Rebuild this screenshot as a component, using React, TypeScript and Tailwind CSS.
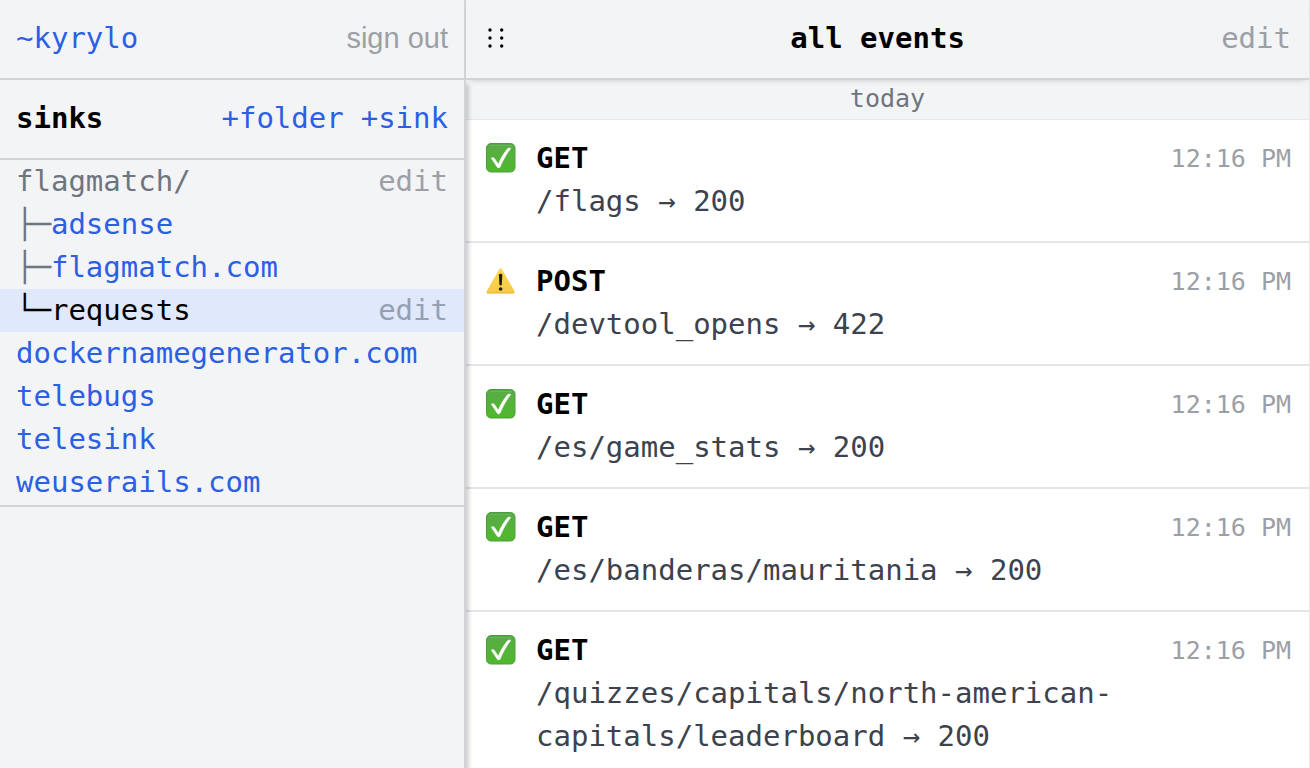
import React from "react";

interface Sink {
  name: string;
  branch?: string;
  selected?: boolean;
}

interface SinkEvent {
  id: number;
  ok: boolean;
  method: string;
  detail: string;
  time: string;
}

const folderSinks: Sink[] = [
  { name: "adsense", branch: "├─" },
  { name: "flagmatch.com", branch: "├─" },
  { name: "requests", branch: "└─", selected: true },
];

const rootSinks: Sink[] = [
  { name: "dockernamegenerator.com" },
  { name: "telebugs" },
  { name: "telesink" },
  { name: "weuserails.com" },
];

const events: SinkEvent[] = [
  { id: 1, ok: true, method: "GET", detail: "/flags → 200", time: "12:16 PM" },
  { id: 2, ok: false, method: "POST", detail: "/devtool_opens → 422", time: "12:16 PM" },
  { id: 3, ok: true, method: "GET", detail: "/es/game_stats → 200", time: "12:16 PM" },
  { id: 4, ok: true, method: "GET", detail: "/es/banderas/mauritania → 200", time: "12:16 PM" },
  {
    id: 5,
    ok: true,
    method: "GET",
    detail: "/quizzes/capitals/north-american-capitals/leaderboard → 200",
    time: "12:16 PM",
  },
];

function CheckIcon() {
  return (
    <svg viewBox="0 0 30 30" className="size-[30px]" role="img" aria-label="Success">
      <defs>
        <linearGradient id="check-fill" x1="0" y1="0" x2="0" y2="1">
          <stop offset="0" stopColor="#4fa045" />
          <stop offset="0.12" stopColor="#58ad45" />
          <stop offset="1" stopColor="#4fb82b" />
        </linearGradient>
      </defs>
      <rect x="0.5" y="0.5" width="28.5" height="28.5" rx="4.5" fill="url(#check-fill)" stroke="#4a9f3a" />
      <path d="M4 2.3h22" stroke="#6fb861" strokeWidth="1" strokeLinecap="round" />
      <path
        d="M5.200 15.200c1-1 2.400-1.100 3.200.1l3.900 5.700C14.600 15.600 17.800 10 21.600 5.600c.8-.9 2.200-.9 3.200-.1C20.600 11 17.100 17 14.200 24c-.5 1.200-2.300 1.300-3 .2z"
        fill="#fff"
        stroke="#fff"
        strokeWidth="0.4"
      />
    </svg>
  );
}

function WarningIcon() {
  return (
    <svg viewBox="0 0 30 30" className="size-[30px]" role="img" aria-label="Warning">
      <defs>
        <linearGradient id="warn-fill" x1="0" y1="0" x2="0" y2="1">
          <stop offset="0" stopColor="#fbd65c" />
          <stop offset="1" stopColor="#f8ca45" />
        </linearGradient>
      </defs>
      <path
        d="M13.200 3.200c.7-1.200 2.100-1.200 2.800 0L28.400 25c.7 1.200.1 2.400-1.300 2.400H2.100C.7 27.400.1 26.200.8 25z"
        fill="url(#warn-fill)"
      />
      <path d="M1.500 26.800h26" stroke="#ecb73b" strokeLinecap="round" />
      <path d="M12.900 9.300c-.1-2 3.500-2 3.400 0l-.5 9.200c-.1 1.200-2.300 1.200-2.400 0z" fill="#221c0c" />
      <circle cx="14.6" cy="23" r="1.8" fill="#221c0c" />
    </svg>
  );
}

function DragHandle() {
  return (
    <button type="button" aria-label="Reorder" className="w-12">
      <svg viewBox="0 0 24 24" className="size-6" fill="#000">
        {[4, 12, 20].map((y) => (
          <React.Fragment key={y}>
            <circle cx="4" cy={y} r="1.7" />
            <circle cx="15.7" cy={y} r="1.7" />
          </React.Fragment>
        ))}
      </svg>
    </button>
  );
}

function SinkRow({ name, branch, selected }: Sink) {
  return (
    <li
      className={`flex justify-between px-4 ${
        selected ? "bg-[#dfe9fb] text-black" : "text-[#6f757e]"
      }`}
    >
      <span className="whitespace-pre">
        {branch}
        <a href="#" className={selected ? "text-black" : "text-[#2b60e4]"}>
          {name}
        </a>
      </span>
      {selected && (
        <a href="#" className="text-[#94a0b5]">
          edit
        </a>
      )}
    </li>
  );
}

function Sidebar() {
  return (
    <aside className="flex w-[466px] shrink-0 flex-col">
      <div className="flex h-20 shrink-0 items-center justify-between border-r-2 border-b-2 border-[#d1d3d7] bg-gray-100 px-4 pb-0.5">
        <a href="#" className="text-[#2b60e4]">
          ~kyrylo
        </a>
        <button type="button" className="font-['Liberation_Sans',sans-serif] text-[#9ca0a6]">
          sign out
        </button>
      </div>
      <div className="relative z-10 flex-1 border-r-2 border-[#d1d3d7] bg-gray-100 shadow-[3px_4px_4px_rgba(0,0,0,0.18)]">
        <div className="flex h-20 items-center justify-between border-b-2 border-[#d1d3d7] px-4 pb-0.5">
          <h2 className="font-bold">sinks</h2>
          <div className="flex gap-[17px] text-[#2b60e4]">
            <a href="#">+folder</a>
            <a href="#">+sink</a>
          </div>
        </div>
        <ul className="border-b-2 border-[#d1d3d7] pb-px">
          <li className="flex justify-between px-4">
            <span className="text-[#6f757e]">flagmatch/</span>
            <a href="#" className="text-[#9ca0a6]">
              edit
            </a>
          </li>
          {folderSinks.map((sink) => (
            <SinkRow key={sink.name} {...sink} />
          ))}
          {rootSinks.map((sink) => (
            <SinkRow key={sink.name} {...sink} />
          ))}
        </ul>
      </div>
    </aside>
  );
}

function EventRow({ event }: { event: SinkEvent }) {
  return (
    <li className="flex gap-5 border-b-2 border-[#e5e5e7] pt-[17px] pb-[18px] pl-5 pr-[18px]">
      <div className="flex h-[42px] shrink-0 items-center">
        {event.ok ? <CheckIcon /> : <WarningIcon />}
      </div>
      <div className="min-w-0 flex-1">
        <h3 className="font-bold">{event.method}</h3>
        <p className="text-[#3c424e]">{event.detail}</p>
      </div>
      <time className="shrink-0 text-[25px] text-[#9ca0a6]">{event.time}</time>
    </li>
  );
}

export default function App() {
  return (
    <div className="flex h-screen overflow-hidden bg-white font-['DejaVu_Sans_Mono',monospace] text-[29px] leading-[43px] text-black">
      <Sidebar />
      <main className="flex min-w-0 flex-1 flex-col border-r border-gray-200">
        <header className="z-10 flex h-20 shrink-0 items-center border-b-2 border-[#d1d3d7] bg-gray-100 pb-0.5 pl-5 pr-[18px] shadow-[0_4px_6px_-4px_rgba(0,0,0,0.2)]">
          <DragHandle />
          <h1 className="flex-1 text-center font-bold">all events</h1>
          <a href="#" className="text-[#9ca0a6]">
            edit
          </a>
        </header>
        <div className="flex-1 overflow-y-auto [scrollbar-width:none]">
          <div className="h-10 border-b border-gray-200 bg-gray-100 text-center text-[25px] leading-[38px] text-[#6f757e]">
            today
          </div>
          <ul>
            {events.map((event) => (
              <EventRow key={event.id} event={event} />
            ))}
          </ul>
        </div>
      </main>
    </div>
  );
}
